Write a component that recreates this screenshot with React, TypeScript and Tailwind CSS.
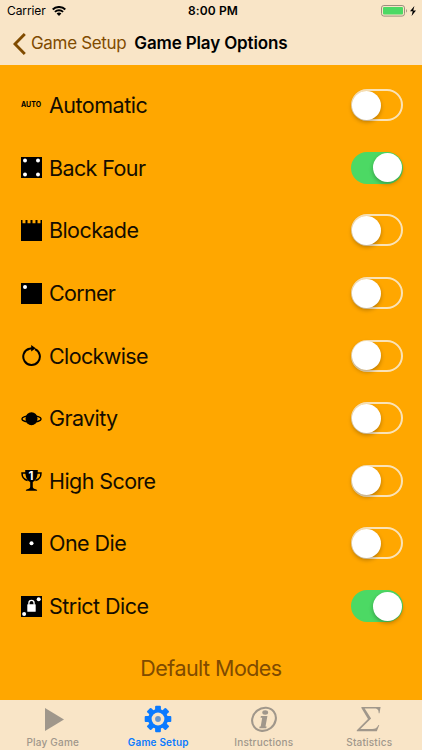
import { useState, type ReactNode } from "react";

type Option = {
  name: string;
  icon: ReactNode;
  tracking: string;
  enabled?: boolean;
};

function DieIcon({ children }: { children?: ReactNode }) {
  return (
    <svg viewBox="0 0 21 21" className="size-[21px]">
      <rect width="21" height="21" fill="#000" />
      <g fill="#fff">{children}</g>
    </svg>
  );
}

function BlockadeIcon() {
  return (
    <svg viewBox="0 0 21 21" className="size-[21px]">
      <path d="M0 0h1.5v3.2h3V0h2v3.2h3V0h2v3.2h3V0h2v3.2h3V0H21v21H0z" />
    </svg>
  );
}

function ClockwiseIcon() {
  return (
    <svg viewBox="0 0 21 21" className="size-[21px]">
      <path d="M7.9 3.8A8.3 8.3 0 1 0 14 4.1" fill="none" stroke="#000" strokeWidth="2" />
      <path d="M6.7 3.6c1.3-.8 2.4-1 3.5-1.1V0l4.5 3.3-4.5 3.2V4.6c-1.1.1-2.1.4-3 1z" />
    </svg>
  );
}

function GravityIcon() {
  return (
    <svg viewBox="0 0 21 21" className="size-[21px]">
      <ellipse cx="10.5" cy="10.9" rx="9.6" ry="3.3" fill="none" stroke="#000" strokeWidth="1.4" />
      <ellipse cx="10.5" cy="10.7" rx="6" ry="6.5" />
    </svg>
  );
}

function TrophyIcon() {
  return (
    <svg viewBox="0 0 21 21" className="size-[21px] overflow-visible">
      <path
        d="M5 3.1H1c0 3.8 2.2 6.7 5.6 7.3M16 3.1h4c0 3.8-2.2 6.7-5.6 7.3"
        fill="none"
        stroke="#000"
        strokeWidth="1.5"
      />
      <path d="M4.2 0h12.6c0 5.6-1.2 10.2-5 12.1v5c0 1.3 1.2 1.8 3.6 2.4.5.2.8.6.8 1.3H4.8c0-.7.3-1.1.8-1.3 2.4-.6 3.6-1.1 3.6-2.4v-5C5.4 10.2 4.2 5.6 4.2 0z" />
      <text
        x="10"
        y="9.9"
        textAnchor="middle"
        fill="#fff"
        className="font-['Inter',sans-serif] text-[11.5px] font-bold"
      >
        1
      </text>
    </svg>
  );
}

function LockDieIcon() {
  return (
    <DieIcon>
      <circle cx="17.7" cy="3.3" r="2" />
      <circle cx="3.1" cy="18" r="2" />
      <rect x="6.3" y="8.3" width="8.4" height="7.4" rx="0.5" />
      <path d="M7.9 8.8V7a2.6 2.6 0 0 1 5.2 0v1.8" fill="none" stroke="#fff" strokeWidth="1.3" />
    </DieIcon>
  );
}

const OPTIONS: Option[] = [
  {
    name: "Automatic",
    tracking: "tracking-[-0.5px]",
    icon: <span className="-mt-[2px] text-[7px] leading-none font-bold">AUTO</span>,
  },
  {
    name: "Back Four",
    tracking: "tracking-[-0.6px]",
    enabled: true,
    icon: (
      <DieIcon>
        <circle cx="4" cy="3.6" r="2" />
        <circle cx="17" cy="3.6" r="2" />
        <circle cx="4" cy="17.4" r="2" />
        <circle cx="17" cy="17.4" r="2" />
      </DieIcon>
    ),
  },
  { name: "Blockade", tracking: "tracking-[-0.58px]", icon: <BlockadeIcon /> },
  {
    name: "Corner",
    tracking: "tracking-[-0.7px]",
    icon: (
      <DieIcon>
        <circle cx="4" cy="4" r="2" />
      </DieIcon>
    ),
  },
  { name: "Clockwise", tracking: "tracking-[-0.62px]", icon: <ClockwiseIcon /> },
  { name: "Gravity", tracking: "tracking-[-0.6px]", icon: <GravityIcon /> },
  { name: "High Score", tracking: "tracking-[-0.58px]", icon: <TrophyIcon /> },
  {
    name: "One Die",
    tracking: "tracking-[-0.55px]",
    icon: (
      <DieIcon>
        <circle cx="10.5" cy="10.3" r="2" />
      </DieIcon>
    ),
  },
  { name: "Strict Dice", tracking: "tracking-[-0.54px]", enabled: true, icon: <LockDieIcon /> },
];

function Toggle({ label, on, onChange }: { label: string; on: boolean; onChange: () => void }) {
  return (
    <button
      type="button"
      role="switch"
      aria-checked={on}
      aria-label={label}
      onClick={onChange}
      className={`flex h-8 w-[52px] items-center rounded-full border-2 ${
        on ? "justify-end border-[#4cd964] bg-[#4cd964]" : "justify-start border-[#fae3b8]"
      }`}
    >
      <span
        className={`size-[29px] shrink-0 rounded-full bg-white shadow-[0_2px_4px_rgba(0,0,0,0.28)] ${
          on ? "-mr-px" : "-ml-px"
        }`}
      />
    </button>
  );
}

function StatusBar() {
  return (
    <div className="grid h-[22px] grid-cols-3 items-center px-[7px] text-[12px] text-black">
      <div className="flex items-center gap-1.5">
        <span className="tracking-[-0.1px]">Carrier</span>
        <svg viewBox="0 0 14 10" className="h-[10px] w-[14px]">
          <g fill="none" stroke="#000" strokeWidth="1.9">
            <path d="M0.7 3.5a9 9 0 0 1 12.6 0" />
            <path d="M2.9 5.9a5.9 5.9 0 0 1 8.2 0" />
          </g>
          <path d="M4.6 7.6a3.5 3.5 0 0 1 4.8 0L7 10z" />
        </svg>
      </div>
      <span className="pl-[4px] text-center text-[12px] font-semibold tracking-[0.1px]">
        8:00 PM
      </span>
      <div className="flex items-center justify-end">
        <svg viewBox="0 0 36 12" className="-mr-[2px] h-3 w-9">
          <rect x="0.5" y="0.5" width="23" height="10.6" rx="2.4" fill="none" stroke="#9b8f7d" />
          <rect x="2" y="2" width="20" height="7.6" rx="1" fill="#4cd964" />
          <path d="M25 4c1.2.4 1.2 3.2 0 3.6z" fill="#9b8f7d" />
          <path d="M33.4 0.9 29 6.3h2.7L30.6 11l4.4-5.6h-2.8z" />
        </svg>
      </div>
    </div>
  );
}

function NavBar() {
  return (
    <div className="flex h-[43px] items-center pl-[13px] text-[17px]">
      <button type="button" className="flex items-center gap-[5px] text-[#804b00]">
        <svg viewBox="0 0 13 22" className="h-[22px] w-[13px]">
          <path d="M11.8 1.1 2 11l9.8 9.9" fill="none" stroke="currentColor" strokeWidth="2.9" />
        </svg>
        <span className="tracking-[-0.33px]">Game Setup</span>
      </button>
      <h1 className="ml-2 font-semibold tracking-[-0.15px] text-black">Game Play Options</h1>
    </div>
  );
}

const TABS = [
  {
    name: "Play Game",
    icon: (
      <svg viewBox="0 0 30 28" className="h-7 w-[30px]">
        <path d="M7 3v23l19-11.5z" fill="currentColor" />
      </svg>
    ),
  },
  {
    name: "Game Setup",
    active: true,
    icon: (
      <svg viewBox="0 0 30 28" className="h-7 w-[30px]">
        <g fill="currentColor" transform="translate(15 14)">
          <rect x="-2.9" y="-13.3" width="5.8" height="26.6" rx="1" />
          <rect x="-2.9" y="-13.3" width="5.8" height="26.6" rx="1" transform="rotate(45)" />
          <rect x="-2.9" y="-13.3" width="5.8" height="26.6" rx="1" transform="rotate(90)" />
          <rect x="-2.9" y="-13.3" width="5.8" height="26.6" rx="1" transform="rotate(135)" />
          <circle r="10" />
          <circle r="6.4" fill="#f9e5c7" />
          <circle r="2.9" fill="#6495cf" />
        </g>
      </svg>
    ),
  },
  {
    name: "Instructions",
    icon: (
      <svg viewBox="0 0 30 28" className="h-7 w-[30px]">
        <ellipse
          cx="15"
          cy="14.3"
          rx="12.4"
          ry="11"
          fill="none"
          stroke="currentColor"
          strokeWidth="2.1"
          transform="rotate(-38 15 14.3)"
        />
        <g fill="currentColor">
          <ellipse cx="16.2" cy="7.5" rx="2.9" ry="2.2" />
          <path d="M11.9 11.1h6.5l-1.9 10.4h1.1l-.3 1.7h-7l.3-1.7h1.1l1.5-8.7h-1.6z" />
        </g>
      </svg>
    ),
  },
  {
    name: "Statistics",
    icon: (
      <svg viewBox="0 0 30 28" className="h-7 w-[30px]">
        <path
          d="M7.4 2h19.2l-1.1 6.3h-.8c0-3.4-1-4.9-4.2-4.9H10.7l6.4 10L6.4 24h11.8c3 0 4.8-1.2 6.3-4.1h.8l-2.5 6.3H2.8v-.9L14 14 7.4 2.9z"
          fill="currentColor"
        />
      </svg>
    ),
  },
];

function TabBar() {
  return (
    <nav className="grid h-[50px] shrink-0 grid-cols-4 bg-[#f9e5c7] pt-[5px]">
      {TABS.map((tab) => (
        <button
          key={tab.name}
          type="button"
          className={`flex flex-col items-center gap-[3px] text-[10px] leading-3 tracking-[0.2px] ${
            tab.active ? "font-semibold text-[#0a7aff]" : "font-medium text-[#a0978b]"
          }`}
        >
          {tab.icon}
          <span>{tab.name}</span>
        </button>
      ))}
    </nav>
  );
}

export default function App() {
  const [enabled, setEnabled] = useState<Record<string, boolean>>(() =>
    Object.fromEntries(OPTIONS.map((o) => [o.name, o.enabled === true]))
  );

  const toggle = (name: string) => setEnabled((prev) => ({ ...prev, [name]: !prev[name] }));

  return (
    <div className="flex h-[750px] w-[422px] flex-col overflow-hidden bg-[#ffa700] font-['Inter',sans-serif]">
      <header className="h-[65px] shrink-0 bg-[#f9e5c7]">
        <StatusBar />
        <NavBar />
      </header>

      <main className="flex flex-1 flex-col pt-[9px]">
        {OPTIONS.map((option) => (
          <div key={option.name} className="flex flex-1 items-center pr-[19px] pl-5">
            <div className="flex w-[22px] justify-center">{option.icon}</div>
            <span
              className={`ml-[7px] flex-1 text-[21.5px] leading-7 text-[#140d00] ${option.tracking}`}
            >
              {option.name}
            </span>
            <Toggle
              label={option.name}
              on={enabled[option.name]}
              onChange={() => toggle(option.name)}
            />
          </div>
        ))}
        <button type="button" className="flex-1 text-[21.5px] tracking-[-0.55px] text-[#804b00]">
          <span className="block pb-px">Default Modes</span>
        </button>
      </main>

      <TabBar />
    </div>
  );
}
